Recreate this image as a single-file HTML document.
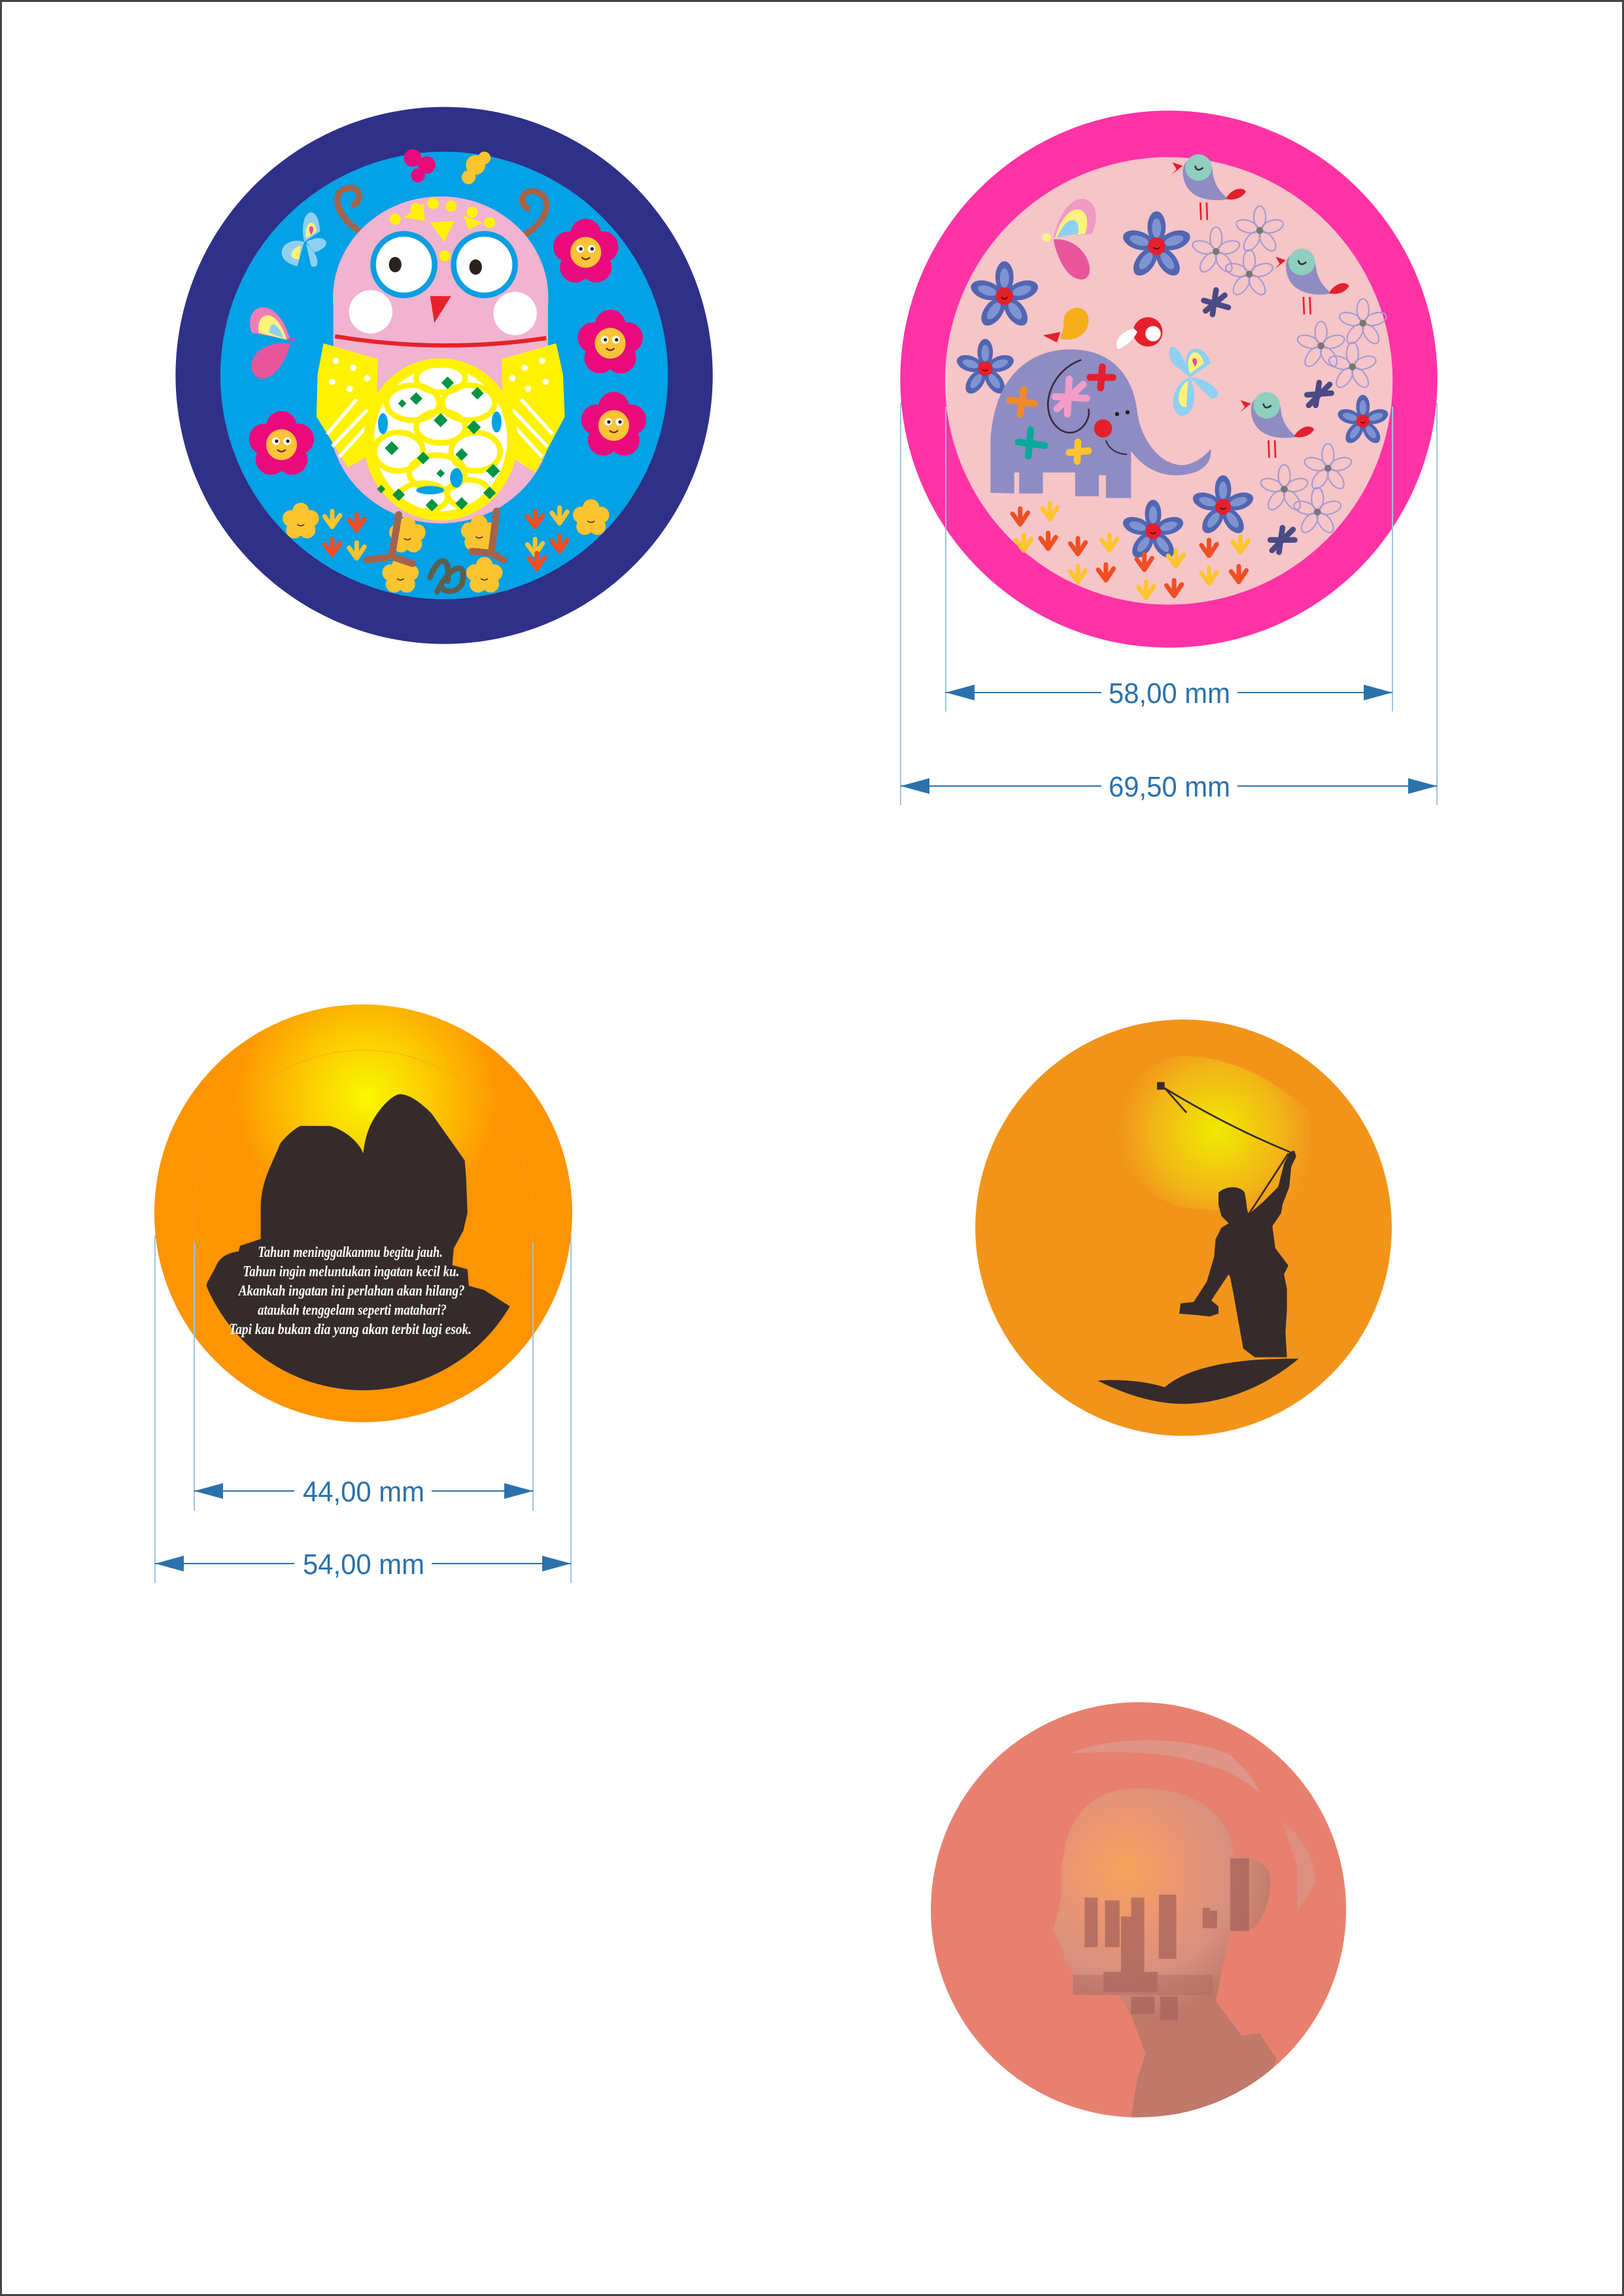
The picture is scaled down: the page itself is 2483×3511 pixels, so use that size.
<!DOCTYPE html>
<html><head><meta charset="utf-8"><style>
html,body{margin:0;padding:0;background:#fff;}
svg{display:block;}
</style></head><body>
<svg width="2483" height="3511" viewBox="0 0 2483 3511" xmlns="http://www.w3.org/2000/svg">
<defs>
  <g id="pf">
    <circle cx="0" cy="-52" r="44" fill="#ea0a7c"/>
    <circle cx="49" cy="-16" r="44" fill="#ea0a7c"/>
    <circle cx="30" cy="42" r="44" fill="#ea0a7c"/>
    <circle cx="-30" cy="42" r="44" fill="#ea0a7c"/>
    <circle cx="-49" cy="-16" r="44" fill="#ea0a7c"/>
    <circle cx="0" cy="0" r="44" fill="#fbc337"/>
    <circle cx="-16" cy="-10" r="11" fill="#fff"/><circle cx="16" cy="-10" r="11" fill="#fff"/>
    <circle cx="-14" cy="-10" r="5" fill="#222"/><circle cx="18" cy="-10" r="5" fill="#222"/>
    <path d="M-12,14 Q0,26 12,14" stroke="#5a2a10" stroke-width="4" fill="none"/>
  </g>
  <g id="yf">
    <circle cx="0" cy="-30" r="24" fill="#fcc42f"/>
    <circle cx="28" cy="-9" r="24" fill="#fcc42f"/>
    <circle cx="18" cy="24" r="24" fill="#fcc42f"/>
    <circle cx="-18" cy="24" r="24" fill="#fcc42f"/>
    <circle cx="-28" cy="-9" r="24" fill="#fcc42f"/>
    <circle cx="0" cy="0" r="24" fill="#fcc42f"/>
    <path d="M-10,8 Q0,16 10,8" stroke="#5a2a10" stroke-width="3" fill="none"/>
  </g>
  <g id="bf">
    <ellipse cx="0" cy="-55" rx="26" ry="45" fill="#5165b1"/>
    <ellipse cx="0" cy="-55" rx="26" ry="45" fill="#5165b1" transform="rotate(72)"/>
    <ellipse cx="0" cy="-55" rx="26" ry="45" fill="#5165b1" transform="rotate(144)"/>
    <ellipse cx="0" cy="-55" rx="26" ry="45" fill="#5165b1" transform="rotate(216)"/>
    <ellipse cx="0" cy="-55" rx="26" ry="45" fill="#5165b1" transform="rotate(288)"/>
    <ellipse cx="0" cy="-52" rx="13" ry="28" fill="#7e94d2"/>
    <ellipse cx="0" cy="-52" rx="13" ry="28" fill="#7e94d2" transform="rotate(72)"/>
    <ellipse cx="0" cy="-52" rx="13" ry="28" fill="#7e94d2" transform="rotate(144)"/>
    <ellipse cx="0" cy="-52" rx="13" ry="28" fill="#7e94d2" transform="rotate(216)"/>
    <ellipse cx="0" cy="-52" rx="13" ry="28" fill="#7e94d2" transform="rotate(288)"/>
    <circle r="25" fill="#e4202c"/>
    <path d="M-9,3 Q0,12 9,3" stroke="#400" stroke-width="3" fill="none"/>
  </g>
  <g id="of" fill="none" stroke="#a49ad0" stroke-width="4">
    <ellipse cx="0" cy="-38" rx="17" ry="32"/>
    <ellipse cx="0" cy="-38" rx="17" ry="32" transform="rotate(72)"/>
    <ellipse cx="0" cy="-38" rx="17" ry="32" transform="rotate(144)"/>
    <ellipse cx="0" cy="-38" rx="17" ry="32" transform="rotate(216)"/>
    <ellipse cx="0" cy="-38" rx="17" ry="32" transform="rotate(288)"/>
    <circle r="10" fill="#777" stroke="none"/>
  </g>
  <g id="bird">
    <path d="M-40,-20 C-40,-70 40,-75 45,-20 C50,30 80,50 90,60 C40,70 -40,60 -40,-20 Z" fill="#8f8cc3"/>
    <circle cx="5" cy="-30" r="38" fill="#8fcfc0"/>
    <path d="M-5,-35 Q0,-15 18,-30" stroke="#333" stroke-width="5" fill="none"/>
    <path d="M-40,-35 L-70,-45 L-58,-25 L-72,-10 Z" fill="#e4202c"/>
    <path d="M85,55 C110,20 140,30 140,40 C130,55 110,65 85,60 Z" fill="#e4202c"/>
    <path d="M10,70 L12,120 M28,70 L30,120" stroke="#e4202c" stroke-width="5"/>
  </g>
  <g id="arr">
    <path d="M0,0 L0,45 M0,45 L-22,15 M0,45 L22,12" stroke-width="13" stroke-linecap="round" fill="none"/>
  </g>
  <radialGradient id="g3" cx="785" cy="350" r="560" gradientUnits="userSpaceOnUse">
    <stop offset="0" stop-color="#f9f900"/>
    <stop offset="0.5" stop-color="#fdc000"/>
    <stop offset="0.85" stop-color="#fd9602"/>
    <stop offset="1" stop-color="#fd9402"/>
  </radialGradient>
  <radialGradient id="g4" cx="900" cy="450" r="380" gradientUnits="userSpaceOnUse">
    <stop offset="0" stop-color="#f0ea00"/>
    <stop offset="0.6" stop-color="#f2b418"/>
    <stop offset="1" stop-color="#f2941a" stop-opacity="0"/>
  </radialGradient>
  <radialGradient id="g5" cx="720" cy="650" r="520" gradientUnits="userSpaceOnUse">
    <stop offset="0" stop-color="#f5a45a"/>
    <stop offset="0.35" stop-color="#ec9672"/>
    <stop offset="0.7" stop-color="#d8907f"/>
    <stop offset="1" stop-color="#bf786a"/>
  </radialGradient>
  <clipPath id="c3"><circle cx="772" cy="797" r="617"/></clipPath>
  <clipPath id="c5"><circle cx="765" cy="787" r="713"/></clipPath>
</defs>

<rect x="1.5" y="1.5" width="2480" height="3508" fill="#fff" stroke="#4a4446" stroke-width="3"/>

<!-- OWL -->
<g transform="translate(262,156) scale(0.5347)">
  <circle cx="780" cy="782" r="768" fill="#2f3088"/>
  <circle cx="780" cy="782" r="640" fill="#03a1e5"/>
  <g fill="#ea0a7c"><circle cx="690" cy="160" r="25"/><circle cx="730" cy="180" r="25"/><circle cx="705" cy="210" r="20"/></g>
  <g fill="#fcc42f"><circle cx="870" cy="180" r="28"/><circle cx="850" cy="215" r="20"/><circle cx="895" cy="160" r="18"/></g>
  <path d="M540,370 C470,330 450,250 510,245 C545,245 545,290 515,295" stroke="#a4634a" stroke-width="18" fill="none"/>
  <path d="M1010,380 C1080,340 1095,265 1035,255 C995,255 995,300 1025,305" stroke="#a4634a" stroke-width="18" fill="none"/>
  <ellipse cx="770" cy="900" rx="320" ry="305" fill="#f1b3cf"/>
  <ellipse cx="770" cy="560" rx="308" ry="290" fill="#f1b3cf"/>
  <rect x="463" y="560" width="614" height="340" fill="#f1b3cf"/>
  <g fill="#fff200">
    <circle cx="640" cy="335" r="16"/><circle cx="700" cy="305" r="16"/><circle cx="748" cy="290" r="16"/><circle cx="800" cy="298" r="16"/><circle cx="860" cy="315" r="16"/><circle cx="910" cy="345" r="16"/><circle cx="782" cy="440" r="16"/>
    <path d="M665,330 L720,290 L725,340 Z"/><path d="M835,325 L890,345 L850,365 Z"/><path d="M740,345 L810,340 L780,400 Z"/>
  </g>
  <circle cx="665" cy="465" r="88" fill="#fff" stroke="#0a9ee0" stroke-width="16"/>
  <circle cx="895" cy="465" r="88" fill="#fff" stroke="#0a9ee0" stroke-width="16"/>
  <ellipse cx="640" cy="465" rx="18" ry="22" fill="#2a2220"/>
  <ellipse cx="870" cy="472" rx="18" ry="22" fill="#2a2220"/>
  <circle cx="570" cy="600" r="62" fill="#fff"/>
  <circle cx="983" cy="605" r="62" fill="#fff"/>
  <path d="M740,555 L800,555 L752,632 Z" fill="#e7212a"/>
  <path d="M468,670 Q770,720 1072,675" stroke="#e7212a" stroke-width="12" fill="none"/>
  <path d="M435,690 L590,735 L585,1000 L505,1045 L415,900 L418,780 Z" fill="#fff200"/>
  <path d="M1100,690 L945,735 L950,1000 L1040,1060 L1125,900 L1120,780 Z" fill="#fff200"/>
  <g stroke="#fff" stroke-width="10" fill="none">
    <path d="M445,950 L530,850 M460,985 L560,880 M480,1015 L575,910"/>
    <path d="M1090,950 L1000,850 M1075,985 L975,880 M1060,1015 L965,910"/>
  </g>
  <g fill="#fff"><circle cx="470" cy="740" r="9"/><circle cx="520" cy="760" r="9"/><circle cx="460" cy="800" r="9"/><circle cx="510" cy="820" r="9"/><circle cx="560" cy="790" r="9"/>
  <circle cx="1060" cy="740" r="9"/><circle cx="1010" cy="760" r="9"/><circle cx="1070" cy="800" r="9"/><circle cx="1020" cy="820" r="9"/><circle cx="975" cy="790" r="9"/></g>
  <ellipse cx="770" cy="965" rx="220" ry="232" fill="#fff200"/>
  <ellipse cx="770" cy="965" rx="190" ry="205" fill="#fff"/>
  <g fill="none" stroke="#fff200" stroke-width="16">
    <ellipse cx="770" cy="790" rx="70" ry="40"/><ellipse cx="690" cy="860" rx="75" ry="50"/><ellipse cx="850" cy="860" rx="75" ry="50"/>
    <ellipse cx="770" cy="930" rx="70" ry="45"/><ellipse cx="650" cy="1000" rx="70" ry="55"/><ellipse cx="870" cy="1000" rx="70" ry="55"/>
    <ellipse cx="760" cy="1060" rx="80" ry="50"/><ellipse cx="720" cy="1130" rx="70" ry="40"/><ellipse cx="850" cy="1120" rx="60" ry="40"/>
  </g>
  <g fill="#03a1e5"><ellipse cx="605" cy="920" rx="14" ry="30"/><ellipse cx="930" cy="915" rx="14" ry="30"/><ellipse cx="740" cy="1110" rx="40" ry="12"/><ellipse cx="815" cy="1075" rx="18" ry="28"/></g>
  <g fill="#009444">
    <path d="M790,785 l18,18 l-18,18 l-18,-18z"/><path d="M700,830 l18,18 l-18,18 l-18,-18z"/><path d="M875,815 l18,18 l-18,18 l-18,-18z"/>
    <path d="M770,890 l20,20 l-20,20 l-20,-20z"/><path d="M630,970 l20,20 l-20,20 l-20,-20z"/><path d="M865,910 l20,20 l-20,20 l-20,-20z"/>
    <path d="M720,1000 l18,18 l-18,18 l-18,-18z"/><path d="M830,990 l18,18 l-18,18 l-18,-18z"/><path d="M920,1035 l20,20 l-20,20 l-20,-20z"/>
    <path d="M650,1105 l18,18 l-18,18 l-18,-18z"/><path d="M745,1135 l18,18 l-18,18 l-18,-18z"/><path d="M830,1130 l18,18 l-18,18 l-18,-18z"/><path d="M910,1100 l18,18 l-18,18 l-18,-18z"/>
    <path d="M660,850 l12,12 l-12,12 l-12,-12z"/><path d="M770,1050 l12,12 l-12,12 l-12,-12z"/><path d="M600,1095 l12,12 l-12,12 l-12,-12z"/>
  </g>
  <use href="#pf" transform="translate(1185,430)"/>
  <use href="#pf" transform="translate(1255,690)"/>
  <use href="#pf" transform="translate(1265,925)"/>
  <use href="#pf" transform="translate(315,980)"/>
  <g transform="translate(380,390)">
    <path d="M0,10 C-20,-80 40,-110 45,-20 Z" fill="#8fd0f2"/><path d="M0,10 C-60,-10 -100,60 -20,80 Z" fill="#8fd0f2"/>
    <path d="M5,10 C60,-20 90,20 30,40 Z" fill="#8fd0f2"/><path d="M5,15 C40,40 50,90 20,80 Z" fill="#8fd0f2"/>
    <path d="M5,0 C0,-50 30,-60 35,-20 Z" fill="#fff27a"/><path d="M-10,20 C-40,30 -50,60 -15,60 Z" fill="#fff27a"/>
    <path d="M15,-20 C10,-40 30,-40 25,-20 L20,-10 Z" fill="#ea4a9a"/>
  </g>
  <g transform="translate(280,680)">
    <path d="M60,0 C20,-140 -80,-100 -50,-20 Z" fill="#f27cb6"/><path d="M60,10 C-40,0 -80,80 -30,110 C10,120 50,60 60,10 Z" fill="#e8559b"/>
    <path d="M50,0 C20,-100 -40,-80 -30,-20 Z" fill="#fff27a"/><path d="M40,-5 C20,-60 0,-50 0,-20 Z" fill="#8fd0f2"/>
    <path d="M55,0 L75,0" stroke="#8a6cc0" stroke-width="12"/>
  </g>
  <use href="#yf" transform="translate(370,1200)"/>
  <use href="#yf" transform="translate(1200,1190)"/>
  <use href="#yf" transform="translate(675,1240)"/>
  <use href="#yf" transform="translate(880,1235)"/>
  <use href="#yf" transform="translate(655,1355)"/>
  <use href="#yf" transform="translate(895,1355)"/>
  <use href="#arr" stroke="#fcc42f" transform="translate(460,1170)"/>
  <use href="#arr" stroke="#f04e23" transform="translate(530,1180)"/>
  <use href="#arr" stroke="#f04e23" transform="translate(460,1250)"/>
  <use href="#arr" stroke="#fcc42f" transform="translate(530,1260)"/>
  <use href="#arr" stroke="#f04e23" transform="translate(1040,1170)"/>
  <use href="#arr" stroke="#fcc42f" transform="translate(1110,1160)"/>
  <use href="#arr" stroke="#fcc42f" transform="translate(1040,1250)"/>
  <use href="#arr" stroke="#f04e23" transform="translate(1110,1240)"/>
  <use href="#arr" stroke="#f04e23" transform="translate(1045,1290)"/>
  <path d="M650,1180 L630,1300 M630,1300 L560,1310 M630,1300 L690,1320 M930,1170 L915,1290 M915,1290 L860,1285 M915,1290 L950,1310" stroke="#a4634a" stroke-width="20" stroke-linecap="round" fill="none"/>
  <path d="M740,1360 C760,1300 800,1290 790,1370 M760,1400 C800,1320 850,1310 830,1380 C810,1410 770,1400 770,1380" stroke="#5e5e4e" stroke-width="16" fill="none" stroke-linecap="round"/>
</g>

<!-- ELEPHANT -->
<g transform="translate(1370,160) scale(0.5347)">
  <circle cx="780" cy="785" r="768" fill="#ff33a5"/>
  <circle cx="780" cy="790" r="640" fill="#f6c5c8"/>
  <use href="#bf" transform="translate(745,405)"/>
  <use href="#bf" transform="translate(310,548)"/>
  <use href="#bf" transform="translate(255,755) scale(0.85)"/>
  <use href="#bf" transform="translate(735,1220) scale(0.9)"/>
  <use href="#bf" transform="translate(935,1150) scale(0.9)"/>
  <use href="#bf" transform="translate(1335,905) scale(0.75)"/>
  <use href="#of" transform="translate(1040,360)"/>
  <use href="#of" transform="translate(915,420)"/>
  <use href="#of" transform="translate(1010,485)"/>
  <use href="#of" transform="translate(1335,625)"/>
  <use href="#of" transform="translate(1215,690)"/>
  <use href="#of" transform="translate(1305,750)"/>
  <use href="#of" transform="translate(1235,1040)"/>
  <use href="#of" transform="translate(1110,1100)"/>
  <use href="#of" transform="translate(1205,1165)"/>
  <g stroke="#4a4a85" stroke-width="16" stroke-linecap="round">
    <path d="M880,560 L950,580 M915,530 L905,600 M885,590 L940,545"/>
    <path d="M1175,830 L1245,825 M1210,795 L1200,860 M1180,860 L1240,800"/>
    <path d="M1070,1245 L1140,1245 M1105,1210 L1095,1280 M1075,1275 L1135,1215"/>
  </g>
  <use href="#bird" transform="translate(860,210)"/>
  <use href="#bird" transform="translate(1155,480)"/>
  <use href="#bird" transform="translate(1055,890)"/>
  <path d="M480,630 C470,580 540,560 550,610 C555,650 520,680 470,670 Z" fill="#f6ad1b"/>
  <path d="M420,660 L470,650 L460,680 Z" fill="#e4202c"/>
  <circle cx="720" cy="650" r="42" fill="#e4202c"/><circle cx="735" cy="655" r="22" fill="#fff"/>
  <path d="M680,640 C640,650 620,680 635,700 C660,690 680,670 690,650 Z" fill="#fff"/>
  <g transform="translate(450,380)">
    <path d="M0,0 C40,-170 160,-120 110,-10 Z" fill="#f09ac4"/><path d="M0,5 C100,0 130,120 80,120 C40,120 10,60 0,5 Z" fill="#e8559b"/>
    <path d="M5,0 C40,-120 120,-90 90,-10 Z" fill="#fff27a"/><path d="M10,0 C40,-70 80,-60 70,-10 Z" fill="#8fd0f2"/>
    <circle cx="-20" cy="0" r="12" fill="#fff27a"/>
  </g>
  <g transform="translate(840,780)">
    <path d="M0,0 C-30,-120 -80,-100 -50,-40 Z" fill="#8fd0f2"/><path d="M0,0 C-40,-90 40,-110 60,-40 Z" fill="#8fd0f2"/>
    <path d="M0,0 C-60,20 -60,110 -20,110 C20,100 20,40 0,0 Z" fill="#8fd0f2"/><path d="M0,0 C60,0 110,60 60,60 Z" fill="#8fd0f2"/>
    <path d="M0,-10 C-20,-80 30,-90 40,-40 Z" fill="#fff27a"/><path d="M-5,10 C-40,30 -40,90 -10,85 Z" fill="#fff27a"/>
    <path d="M10,-40 C0,-60 25,-60 20,-40 L15,-30 Z" fill="#ea4a9a"/>
  </g>
  <path d="M270,1110 L270,960 C280,780 380,700 500,700 C620,700 680,780 690,880 C700,960 760,1040 830,1030 C870,1020 890,995 900,985 C905,1035 860,1060 800,1060 C740,1060 695,1025 672,990 L672,1125 L600,1125 L600,1060 L580,1060 L580,1120 L512,1120 L512,1052 L420,1052 L420,1112 L352,1112 L352,1052 L338,1052 L338,1112 Z" fill="#8f8cc3"/>
  <path d="M530,730 C440,760 400,880 470,930 C520,960 560,900 550,870" stroke="#3b2a40" stroke-width="5" fill="none"/>
  <circle cx="592" cy="926" r="26" fill="#e4202c"/>
  <path d="M600,960 C610,990 640,1000 660,1000" stroke="#3b2a40" stroke-width="4" fill="none"/>
  <circle cx="632" cy="885" r="6" fill="#222"/><circle cx="662" cy="880" r="6" fill="#222"/>
  <g stroke-width="20" stroke-linecap="round">
    <path d="M455,835 L545,840 M495,785 L490,885 M460,870 L535,800" stroke="#f29dc8"/>
    <path d="M325,845 L395,855 M365,815 L355,885" stroke="#f28a2a"/>
    <path d="M350,965 L425,975 M385,930 L378,1005" stroke="#0aa99a"/>
    <path d="M555,780 L620,780 M590,750 L585,810" stroke="#e4202c"/>
    <path d="M495,995 L550,990 M520,965 L518,1020" stroke="#fcc42f"/>
  </g>
  <use href="#arr" stroke="#f04e23" transform="translate(355,1155)"/>
  <use href="#arr" stroke="#fcc42f" transform="translate(440,1140)"/>
  <use href="#arr" stroke="#fcc42f" transform="translate(365,1230)"/>
  <use href="#arr" stroke="#f04e23" transform="translate(435,1225)"/>
  <use href="#arr" stroke="#f04e23" transform="translate(520,1240)"/>
  <use href="#arr" stroke="#fcc42f" transform="translate(610,1230)"/>
  <use href="#arr" stroke="#fcc42f" transform="translate(520,1320)"/>
  <use href="#arr" stroke="#f04e23" transform="translate(600,1315)"/>
  <use href="#arr" stroke="#f04e23" transform="translate(710,1285)"/>
  <use href="#arr" stroke="#fcc42f" transform="translate(800,1275)"/>
  <use href="#arr" stroke="#fcc42f" transform="translate(715,1365)"/>
  <use href="#arr" stroke="#f04e23" transform="translate(795,1360)"/>
  <use href="#arr" stroke="#f04e23" transform="translate(895,1245)"/>
  <use href="#arr" stroke="#fcc42f" transform="translate(985,1235)"/>
  <use href="#arr" stroke="#fcc42f" transform="translate(895,1325)"/>
  <use href="#arr" stroke="#f04e23" transform="translate(980,1320)"/>
</g>

<!-- Upper dimensions -->
<g stroke="#9fc3e0" stroke-width="2">
  <line x1="1377" y1="616" x2="1377" y2="1231"/>
  <line x1="2197" y1="616" x2="2197" y2="1231"/>
  <line x1="1446" y1="622" x2="1446" y2="1088"/>
  <line x1="2129" y1="622" x2="2129" y2="1088"/>
</g>
<g stroke="#2a72ab" stroke-width="2">
  <line x1="1446" y1="1059" x2="1684" y2="1059"/><line x1="1892" y1="1059" x2="2129" y2="1059"/>
  <line x1="1377" y1="1202" x2="1684" y2="1202"/><line x1="1892" y1="1202" x2="2197" y2="1202"/>
</g>
<g fill="#2a72ab">
  <path d="M1446,1059 L1490,1047 L1490,1071 Z"/><path d="M2129,1059 L2085,1047 L2085,1071 Z"/>
  <path d="M1377,1202 L1421,1190 L1421,1214 Z"/><path d="M2197,1202 L2153,1190 L2153,1214 Z"/>
</g>
<g font-family="Liberation Sans, sans-serif" font-size="44" fill="#2a72ab" text-anchor="middle">
  <text x="1788" y="1075" textLength="186" lengthAdjust="spacingAndGlyphs">58,00 mm</text>
  <text x="1788" y="1218" textLength="186" lengthAdjust="spacingAndGlyphs">69,50 mm</text>
</g>

<!-- CIRCLE 3 -->
<g transform="translate(230,1530) scale(0.4215)">
  <circle cx="772" cy="772" r="758" fill="url(#g3)"/>
  <circle cx="772" cy="797" r="617" fill="url(#g3)" stroke="#f7a020" stroke-width="2"/>
  <g clip-path="url(#c3)">
    <path d="M205,1025 L235,970 C250,930 280,915 320,910 L325,890 L400,865 L400,760 C400,650 440,600 470,520 C500,480 540,455 545,455 L650,455 C710,470 760,520 772,555 C780,480 800,440 830,400 C860,360 890,340 905,340 C940,340 980,370 1020,410 L1140,580 L1145,640 L1150,770 L1135,835 L1100,900 L1095,960 L1150,975 L1155,1035 L1210,1050 L1305,1110 L1400,1500 L100,1500 Z" fill="#352b2b"/>
  </g>
  <g font-family="Liberation Serif, serif" font-style="italic" font-weight="bold" font-size="54" fill="#fff" text-anchor="middle">
    <text x="725" y="930" textLength="670" lengthAdjust="spacingAndGlyphs">Tahun meninggalkanmu begitu jauh.</text>
    <text x="728" y="1000" textLength="785" lengthAdjust="spacingAndGlyphs">Tahun ingin meluntukan ingatan kecil ku.</text>
    <text x="730" y="1070" textLength="820" lengthAdjust="spacingAndGlyphs">Akankah ingatan ini perlahan akan hilang?</text>
    <text x="732" y="1140" textLength="685" lengthAdjust="spacingAndGlyphs">ataukah tenggelam seperti matahari?</text>
    <text x="725" y="1210" textLength="880" lengthAdjust="spacingAndGlyphs">Tapi kau bukan dia yang akan terbit lagi esok.</text>
  </g>
</g>

<!-- Lower dimensions -->
<g stroke="#9fc3e0" stroke-width="2">
  <line x1="237" y1="1889" x2="237" y2="2421"/>
  <line x1="873" y1="1889" x2="873" y2="2421"/>
  <line x1="297" y1="1900" x2="297" y2="2310"/>
  <line x1="815" y1="1900" x2="815" y2="2310"/>
</g>
<g stroke="#2a72ab" stroke-width="2">
  <line x1="297" y1="2280" x2="450" y2="2280"/><line x1="660" y1="2280" x2="815" y2="2280"/>
  <line x1="237" y1="2391" x2="450" y2="2391"/><line x1="660" y1="2391" x2="873" y2="2391"/>
</g>
<g fill="#2a72ab">
  <path d="M297,2280 L341,2268 L341,2292 Z"/><path d="M815,2280 L771,2268 L771,2292 Z"/>
  <path d="M237,2391 L281,2379 L281,2403 Z"/><path d="M873,2391 L829,2379 L829,2403 Z"/>
</g>
<g font-family="Liberation Sans, sans-serif" font-size="44" fill="#2a72ab" text-anchor="middle">
  <text x="556" y="2296" textLength="186" lengthAdjust="spacingAndGlyphs">44,00 mm</text>
  <text x="556" y="2407" textLength="186" lengthAdjust="spacingAndGlyphs">54,00 mm</text>
</g>

<!-- CIRCLE 4 -->
<g transform="translate(1460,1530) scale(0.4453)">
  <circle cx="785" cy="780" r="715" fill="#f2941a"/>
  <path d="M560,420 C600,250 700,190 790,190 C950,195 1100,270 1220,385 L1220,650 C1100,720 900,740 750,700 C620,650 540,550 560,420 Z" fill="url(#g4)"/>
  <path d="M1150,520 Q930,430 710,295" stroke="#352b2b" stroke-width="6" fill="none"/>
  <path d="M720,300 L795,385" stroke="#352b2b" stroke-width="6"/>
  <path d="M1145,525 L1005,740" stroke="#352b2b" stroke-width="6"/>
  <rect x="694" y="280" width="26" height="26" fill="#352b2b"/>
  <path d="M905,660 C930,635 980,635 995,660 L1000,690 L1003,715 L1008,735 L1060,690 L1110,640 L1130,560 L1150,520 L1165,515 L1172,535 L1155,570 L1148,640 L1125,700 L1120,730 L1090,775 L1100,850 L1145,910 L1130,940 L1140,990 L1140,1060 L1135,1140 L1140,1225 L1030,1225 L990,1195 L955,1000 L945,950 L940,940 L880,1030 L905,1050 L905,1075 L875,1085 L830,1080 L770,1075 L775,1040 L820,1035 L865,965 L890,880 L895,820 L915,780 L940,765 L915,740 L905,700 Z" fill="#352b2b"/>
  <path d="M490,1305 C560,1300 650,1305 720,1328 C800,1260 950,1228 1180,1230 C1050,1340 900,1385 785,1385 C680,1385 580,1350 490,1305 Z" fill="#352b2b"/>
</g>

<!-- CIRCLE 5 -->
<g transform="translate(1400,2570) scale(0.4453)">
  <circle cx="765" cy="787" r="713" fill="#e8806f"/>
  <g clip-path="url(#c5)">
    <path d="M540,245 C700,185 950,195 1080,255 C1130,300 1170,350 1180,385 C1090,300 900,225 540,250 Z" fill="#df9588"/>
    <path d="M1260,485 C1330,540 1380,620 1370,700 L1310,790 L1310,640 Z" fill="#de8f80"/>
    <path d="M540,1075 L540,1010 L510,960 L505,925 L470,860 L490,790 L500,740 L500,640 L520,540 C540,470 600,400 680,380 C760,360 900,370 980,420 C1060,470 1090,540 1095,610 C1130,600 1180,610 1210,650 C1230,700 1210,800 1160,850 L1080,860 L1030,1100 L1120,1220 L1180,1210 L1240,1300 L1200,1390 L1060,1480 L740,1500 L760,1370 L790,1280 L740,1150 L700,1080 Z" fill="url(#g5)"/>
    <g fill="#a8645c" opacity="0.75">
      <rect x="580" y="745" width="45" height="170"/><rect x="650" y="755" width="50" height="160"/><rect x="705" y="810" width="80" height="200"/>
      <rect x="740" y="745" width="45" height="80"/><rect x="835" y="735" width="60" height="220"/><rect x="985" y="780" width="25" height="70"/>
      <rect x="1010" y="790" width="25" height="60"/><rect x="1080" y="610" width="65" height="250"/><rect x="645" y="1000" width="185" height="70"/>
      <rect x="840" y="1085" width="60" height="80"/><rect x="740" y="1085" width="80" height="60"/><rect x="540" y="1010" width="480" height="70" opacity="0.5"/>
    </g>
  </g>
</g>
</svg>
</body></html>
